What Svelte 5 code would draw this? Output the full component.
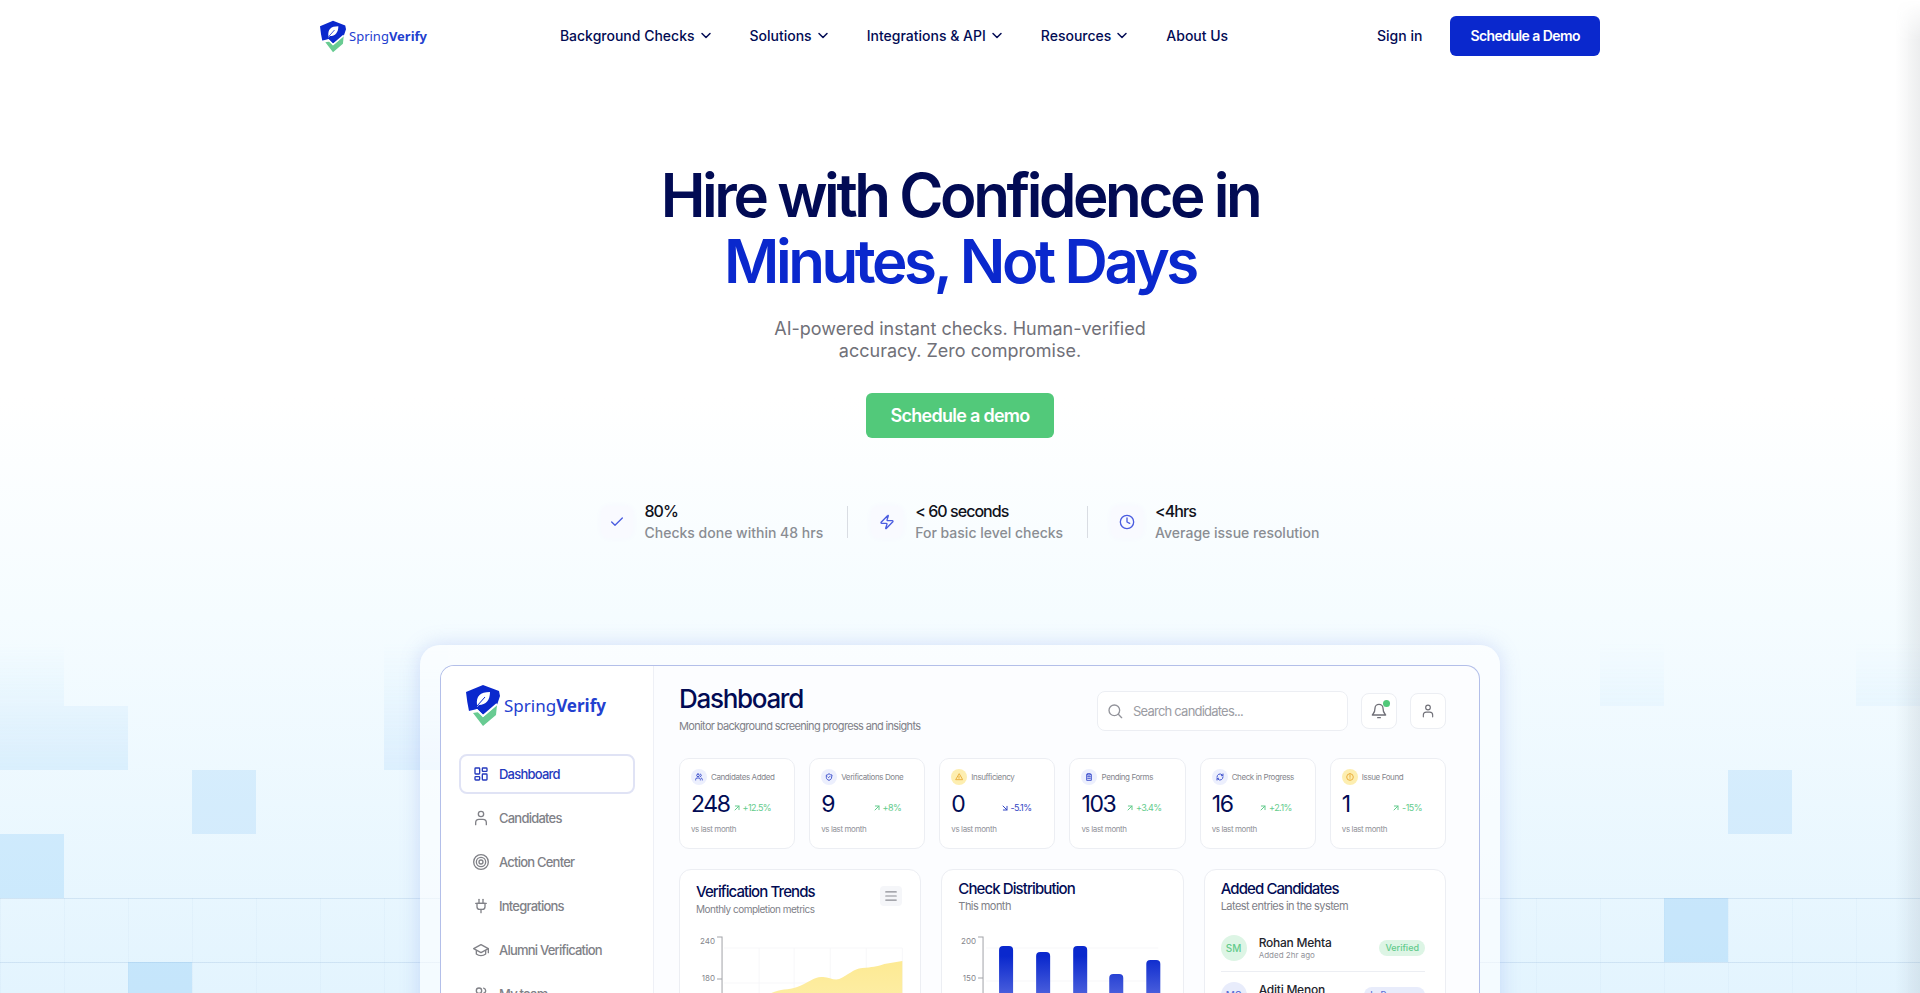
<script>
	const navItems = [
		{ label: 'Background Checks', menu: true },
		{ label: 'Solutions', menu: true },
		{ label: 'Integrations & API', menu: true },
		{ label: 'Resources', menu: true },
		{ label: 'About Us', menu: false }
	];

	const highlights = [
		{ icon: 'check', value: '80%', text: 'Checks done within 48 hrs' },
		{ icon: 'zap', value: '< 60 seconds', text: 'For basic level checks' },
		{ icon: 'clock', value: '<4hrs', text: 'Average issue resolution' }
	];

	const sideItems = [
		{ icon: 'grid', label: 'Dashboard' },
		{ icon: 'user', label: 'Candidates' },
		{ icon: 'target', label: 'Action Center' },
		{ icon: 'plug', label: 'Integrations' },
		{ icon: 'cap', label: 'Alumni Verification' },
		{ icon: 'users', label: 'My team' }
	];

	const stats = [
		{ icon: 'users', label: 'Candidates Added', value: 248, trend: '+12.5%' },
		{ icon: 'shield', label: 'Verifications Done', value: 9, trend: '+8%' },
		{ icon: 'alert', label: 'Insufficiency', value: 0, trend: '-5.1%', down: true, warn: true },
		{ icon: 'clipboard', label: 'Pending Forms', value: 103, trend: '+3.4%' },
		{ icon: 'refresh', label: 'Check in Progress', value: 16, trend: '+2.1%' },
		{ icon: 'info', label: 'Issue Found', value: 1, trend: '-15%', warn: true }
	];

	const candidates = [
		{ initials: 'SM', name: 'Rohan Mehta', added: 'Added 2hr ago', status: 'Verified', tone: 'green' },
		{ initials: 'MS', name: 'Aditi Menon', added: 'Added 2hr ago', status: 'In Progress', tone: 'blue' }
	];

	const bars = [
		{ x: 36, top: 15 },
		{ x: 73, top: 21 },
		{ x: 110, top: 15 },
		{ x: 146, top: 43 },
		{ x: 183, top: 29 }
	];

	// tiles of the background, as column and row on a 64px grid
	const tiles = [
		{ col: 1, row: 1, alpha: 0.16 },
		{ col: 1, row: 2, alpha: 0.17 },
		{ col: 2, row: 2, alpha: 0.17 },
		{ col: 7, row: 1, alpha: 0.14 },
		{ col: 7, row: 2, alpha: 0.15 },
		{ col: 4, row: 3, alpha: 0.2 },
		{ col: 1, row: 4, alpha: 0.24 },
		{ col: 3, row: 6, alpha: 0.28 },
		{ col: 26, row: 1, alpha: 0.12 },
		{ col: 30, row: 1, alpha: 0.12 },
		{ col: 28, row: 3, alpha: 0.2 },
		{ col: 27, row: 5, alpha: 0.28 }
	];

	const paths = {
		check: ['M20 6 9 17l-5-5'],
		zap: ['M4 14a1 1 0 0 1-.78-1.63l9.9-10.2a.5.5 0 0 1 .86.46l-1.92 6.02A1 1 0 0 0 13 10h7a1 1 0 0 1 .78 1.63l-9.9 10.2a.5.5 0 0 1-.86-.46l1.92-6.02A1 1 0 0 0 11 14z'],
		clock: ['M12 2a10 10 0 1 0 0 20 10 10 0 0 0 0-20z', 'M12 6v6l4 2'],
		grid: ['M4 3h5a1 1 0 0 1 1 1v7a1 1 0 0 1-1 1H4a1 1 0 0 1-1-1V4a1 1 0 0 1 1-1z', 'M15 3h5a1 1 0 0 1 1 1v3a1 1 0 0 1-1 1h-5a1 1 0 0 1-1-1V4a1 1 0 0 1 1-1z', 'M15 12h5a1 1 0 0 1 1 1v7a1 1 0 0 1-1 1h-5a1 1 0 0 1-1-1v-7a1 1 0 0 1 1-1z', 'M4 16h5a1 1 0 0 1 1 1v3a1 1 0 0 1-1 1H4a1 1 0 0 1-1-1v-3a1 1 0 0 1 1-1z'],
		user: ['M20 22v-3a5 5 0 0 0-5-5H9a5 5 0 0 0-5 5v3', 'M12 2a4 4 0 1 0 0 8 4 4 0 0 0 0-8z'],
		target: ['M12 1a11 11 0 1 0 0 22 11 11 0 0 0 0-22z', 'M12 5a7 7 0 1 0 0 14 7 7 0 0 0 0-14z', 'M12 9a3 3 0 1 0 0 6 3 3 0 0 0 0-6z'],
		plug: ['M12 22v-5', 'M9 8V2', 'M15 8V2', 'M4 8h16', 'M18 8v5a4 4 0 0 1-4 4h-4a4 4 0 0 1-4-4V8z'],
		cap: ['M12 4 1 10l11 6 11-6z', 'M5 13v5c4 3 10 3 14 0v-5', 'M23 10v6'],
		users: ['M16 21v-2a4 4 0 0 0-4-4H6a4 4 0 0 0-4 4v2', 'M9 3a4 4 0 1 0 0 8 4 4 0 0 0 0-8z', 'M22 21v-2a4 4 0 0 0-3-3.87', 'M16 3.13a4 4 0 0 1 0 7.75'],
		shield: ['M20 13c0 5-3.5 7.5-8 9-4.5-1.5-8-4-8-9V6c3 0 6-1.5 8-4 2 2.5 5 4 8 4z', 'm9 12 2 2 4-4'],
		alert: ['M12 3 2 20h20z', 'M12 10v4', 'M12 17h.01'],
		clipboard: ['M8 4H5v18h14V4h-3', 'M8 2h8v4H8z', 'M8 11h8', 'M8 16h8'],
		refresh: ['M3 12a9 9 0 0 1 15-6.7L21 8', 'M21 3v5h-5', 'M21 12a9 9 0 0 1-15 6.7L3 16', 'M3 21v-5h5'],
		info: ['M12 2a10 10 0 1 0 0 20 10 10 0 0 0 0-20z', 'M12 7v6', 'M12 17h.01'],
		search: ['M11 3a8 8 0 1 0 0 16 8 8 0 0 0 0-16z', 'm22 22-5-5'],
		bell: ['M6 8a6 6 0 0 1 12 0c0 7 3 8 4 10H2c1-2 4-3 4-10', 'M10 22h4'],
		menu: ['M3 5h18', 'M3 12h18', 'M3 19h18'],
		chevron: ['m4 7 8 8 8-8'],
		up: ['M6 18 18 6', 'M7 6h11v11'],
		down: ['m6 6 12 12', 'M18 7v11H7']
	};
</script>

{#snippet icon(name, size, weight = 2)}
	<svg
		width={size}
		height={size}
		viewBox="0 0 24 24"
		fill="none"
		stroke="currentColor"
		stroke-width={weight}
		stroke-linecap="round"
		stroke-linejoin="round"
		aria-hidden="true"
	>
		{#each paths[name] as d}
			<path {d} />
		{/each}
	</svg>
{/snippet}

{#snippet brand()}
	<svg class="brand-mark" viewBox="0 0 34 41" aria-hidden="true">
		<path fill="#0a28cd" d="M17 0 33 6 34 11 31 20 27 23 17 30 11 24 8 26 3 26Q1 17 0 7z" />
		<path fill="#68cb92" d="M7 28 13 27 17 32 31 20 30 30 17 41z" />
		<path fill="#fff" d="M11 20C10 11 14 7 24 7 24 15 20 20 13 20L11 22z" />
		<path fill="none" stroke="#0a28cd" stroke-width="1" d="M11 21 19 12" />
		<path fill="none" stroke="#fff" stroke-width="2" d="M3 27 11 25 17 31 31 19" />
	</svg>
	<span class="brand-name">Spring<b>Verify</b></span>
{/snippet}

<div class="page">
	<div class="backdrop" aria-hidden="true">
		{#each tiles as tile}
			<span
				class="tile"
				style={`grid-column: ${tile.col}; grid-row: ${tile.row}; opacity: ${tile.alpha}`}
			></span>
		{/each}
	</div>

	<header class="topbar">
		<a class="brand" href="/">{@render brand()}</a>
		<nav class="nav">
			{#each navItems as item}
				{#if item.menu}
					<button class="nav-item" type="button">
						{item.label}
						{@render icon('chevron', 12, 3)}
					</button>
				{:else}
					<a class="nav-item" href="/about">{item.label}</a>
				{/if}
			{/each}
		</nav>
		<div class="actions">
			<a class="nav-item" href="/signin">Sign in</a>
			<a class="btn btn--primary" href="/demo">Schedule a Demo</a>
		</div>
	</header>

	<main>
		<section class="hero">
			<h1>Hire with Confidence in <span>Minutes, Not Days</span></h1>
			<p class="lead">AI-powered instant checks. Human-verified accuracy. Zero compromise.</p>
			<a class="btn btn--cta" href="/demo">Schedule a demo</a>

			<ul class="highlights">
				{#each highlights as item}
					<li>
						<span class="highlight-icon">{@render icon(item.icon, 16)}</span>
						<div class="highlight-body">
							<strong>{item.value}</strong>
							<span class="highlight-text">{item.text}</span>
						</div>
					</li>
				{/each}
			</ul>
		</section>

		<section class="frame">
			<div class="app">
				<aside class="sidebar">
					<div class="brand brand--large">{@render brand()}</div>
					<nav class="side-nav">
						{#each sideItems as item, i}
							<a class="side-item" class:side-item--active={i === 0} href="#{item.icon}">
								{@render icon(item.icon, 16)}
								{item.label}
							</a>
						{/each}
					</nav>
				</aside>

				<div class="content">
					<div class="content-head">
						<div>
							<h2>Dashboard</h2>
							<p>Monitor background screening progress and insights</p>
						</div>
						<div class="tools">
							<label class="search">
								{@render icon('search', 16)}
								<input type="search" placeholder="Search candidates..." aria-label="Search candidates" />
							</label>
							<button class="tool" type="button" aria-label="Notifications">
								{@render icon('bell', 16)}
								<span class="dot"></span>
							</button>
							<button class="tool" type="button" aria-label="Account">
								{@render icon('user', 14)}
							</button>
						</div>
					</div>

					<div class="stats">
						{#each stats as stat}
							<article class="stat">
								<div class="stat-label">
									<span class="stat-icon" class:stat-icon--warn={stat.warn}>
										{@render icon(stat.icon, 8, 3)}
									</span>
									{stat.label}
								</div>
								<div class="stat-row">
									<span class="stat-value">{stat.value}</span>
									<span class="trend" class:trend--down={stat.down}>
										{@render icon(stat.down ? 'down' : 'up', 8, 3)}
										{stat.trend}
									</span>
								</div>
								<div class="stat-note">vs last month</div>
							</article>
						{/each}
					</div>

					<div class="panels">
						<article class="panel">
							<div class="panel-head panel-head--menu">
								<div>
									<h3>Verification Trends</h3>
									<p>Monthly completion metrics</p>
								</div>
								<button class="panel-menu" type="button" aria-label="Chart options">
									{@render icon('menu', 14)}
								</button>
							</div>
							<svg class="chart" viewBox="0 0 208 120">
								<defs>
									<linearGradient id="area" x1="0" y1="0" x2="0" y2="1">
										<stop offset="0" stop-color="#fdea93" />
										<stop offset="1" stop-color="#fdf2bd" />
									</linearGradient>
								</defs>
								<path class="gridline" d="M28 17H206M28 52H206M63 17V120M98 17V120M134 17V120M170 17V120M206 17V120" />
								<path
									fill="url(#area)"
									d="M26 120V102C45 92 56 78 75 62C84 58 92 59 101 56C112 52 118 46 125 46C132 45 137 50 143 48C152 44 157 38 166 37C176 36 180 36 188 33L206 30V120z"
								/>
								<path class="axis" d="M21 6H26V120M21 48H26" />
								<text x="19" y="13">240</text>
								<text x="19" y="50">180</text>
							</svg>
						</article>

						<article class="panel">
							<div class="panel-head">
								<div>
									<h3>Check Distribution</h3>
									<p>This month</p>
								</div>
							</div>
							<svg class="chart" viewBox="0 0 208 120">
								<defs>
									<linearGradient id="bar" gradientUnits="userSpaceOnUse" x1="0" y1="25" x2="0" y2="100">
										<stop offset="0" stop-color="#0a28cd" />
										<stop offset="1" stop-color="#8794ea" />
									</linearGradient>
								</defs>
								<path class="gridline" d="M28 17H200M28 50H200" />
								{#each bars as bar}
									<rect x={bar.x + 5} y={bar.top} width="14" height="130" rx="4" fill="url(#bar)" />
								{/each}
								<path class="axis" d="M20 6H25V120M20 47H25" />
								<text x="18" y="13">200</text>
								<text x="18" y="50">150</text>
							</svg>
						</article>

						<article class="panel">
							<div class="panel-head">
								<div>
									<h3>Added Candidates</h3>
									<p>Latest entries in the system</p>
								</div>
							</div>
							<ul class="people">
								{#each candidates as person}
									<li>
										<span class="avatar avatar--{person.tone}">{person.initials}</span>
										<div class="person">
											<strong>{person.name}</strong>
											<small>{person.added}</small>
										</div>
										<span class="badge badge--{person.tone}">{person.status}</span>
									</li>
								{/each}
							</ul>
						</article>
					</div>
				</div>
			</div>
		</section>
	</main>
</div>

<style>
	:global(body) {
		background: #fff;
		font-family: Inter, 'Liberation Sans', sans-serif;
	}

	.page {
		--navy: #020b54;
		--blue: #0a28cd;
		--green: #52c97a;
		--line: #eceef3;
		--muted: #707078;
		position: relative;
		height: 100vh;
		overflow: hidden;
		background: linear-gradient(#fff 40%, #f5fcff 62%, #e3f4fe);
		color: var(--navy);
	}

	.page::after {
		content: '';
		position: absolute;
		inset: 0 0 0 auto;
		width: 24px;
		background: linear-gradient(90deg, transparent, rgba(70, 80, 90, 0.1));
		mask-image: linear-gradient(transparent, #000 40px);
		pointer-events: none;
	}

	.backdrop {
		position: absolute;
		inset: 642px 0 0;
		display: grid;
		grid-template-columns: repeat(30, 64px);
		grid-auto-rows: 64px;
		overflow: hidden;
		mask-image: linear-gradient(transparent, #000 128px);
	}

	.backdrop::before {
		content: '';
		position: absolute;
		inset: 256px 0 0;
		background:
			repeating-linear-gradient(rgba(90, 140, 190, 0.16) 0 1px, transparent 1px 64px),
			repeating-linear-gradient(90deg, rgba(90, 140, 190, 0.04) 0 1px, transparent 1px 64px);
	}

	.tile {
		background: #76bff5;
	}

	a {
		color: inherit;
		text-decoration: none;
	}

	button {
		font: inherit;
		color: inherit;
		padding: 0;
		border: 0;
		background: none;
		cursor: pointer;
	}

	h1,
	h2,
	h3,
	p,
	ul {
		margin: 0;
		padding: 0;
		list-style: none;
	}

	svg {
		flex: none;
	}

	.topbar {
		position: relative;
		display: flex;
		align-items: center;
		justify-content: space-between;
		max-width: 1280px;
		height: 72px;
		margin: 0 auto;
	}

	.brand {
		display: flex;
		align-items: center;
		gap: 3px;
		color: #2340cf;
		font-family: 'Noto Sans', 'Open Sans', sans-serif;
		font-size: 13px;
		line-height: 20px;
	}

	.brand-mark {
		width: 26px;
		height: 33px;
	}

	.brand--large {
		gap: 4px;
		font-size: 17px;
	}

	.brand--large .brand-mark {
		width: 34px;
		height: 41px;
	}

	.nav {
		display: flex;
		gap: 38px;
		margin-right: 16px;
	}

	.nav-item {
		display: flex;
		align-items: center;
		gap: 5px;
		font-size: 14px;
		font-weight: 500;
		line-height: 20px;
	}

	.actions {
		display: flex;
		align-items: center;
		gap: 28px;
	}

	.btn {
		display: inline-block;
		border-radius: 6px;
		color: #fff;
		font-weight: 600;
		letter-spacing: -0.04em;
	}

	.btn--primary {
		padding: 10px 20px;
		background: var(--blue);
		font-size: 14px;
		line-height: 20px;
	}

	.hero {
		position: relative;
		display: flex;
		flex-direction: column;
		align-items: center;
		padding: 90px 24px 0;
		text-align: center;
	}

	h1 {
		font-size: 60px;
		font-weight: 600;
		line-height: 66px;
		letter-spacing: -0.057em;
	}

	h1 span {
		display: block;
		color: var(--blue);
	}

	.lead {
		max-width: 400px;
		margin-top: 24px;
		color: var(--muted);
		font-size: 18px;
		line-height: 22px;
	}

	.btn--cta {
		margin-top: 31px;
		padding: 11px 24px;
		background: var(--green);
		font-size: 18px;
		line-height: 23px;
	}

	.highlights {
		display: flex;
		margin-top: 62px;
		text-align: left;
	}

	.highlights li {
		display: flex;
		align-items: center;
		gap: 12px;
		height: 44px;
	}

	.highlights li + li {
		position: relative;
		margin-left: 24px;
		padding-left: 24px;
	}

	.highlights li + li::before {
		content: '';
		position: absolute;
		left: 0;
		top: 6px;
		bottom: 6px;
		width: 1px;
		background: #d9dde3;
	}

	.highlight-icon {
		display: grid;
		place-items: center;
		width: 32px;
		height: 32px;
		border-radius: 8px;
		background: #f9faff;
		box-shadow: 0 0 6px #f6f7ff;
		color: #4a5ce0;
	}

	.highlight-body {
		padding-bottom: 2px;
	}

	.highlights strong {
		display: block;
		color: #10121c;
		font-size: 16px;
		font-weight: 500;
		line-height: 22px;
		letter-spacing: -0.06em;
	}

	.highlight-text {
		color: #8a8d93;
		font-size: 14px;
		font-weight: 500;
		line-height: 20px;
	}

	.frame {
		position: relative;
		box-sizing: border-box;
		max-width: 1080px;
		margin: 101px auto 0;
		padding: 20px 20px 0;
		border-radius: 20px 20px 0 0;
		background: rgba(255, 255, 255, 0.6);
		box-shadow: 0 0 20px rgba(120, 145, 235, 0.28);
	}

	.app {
		display: grid;
		grid-template-columns: 213px 1fr;
		border: 1px solid #b3bfe9;
		border-bottom: 0;
		border-radius: 14px 14px 0 0;
		background: #fcfdff;
		overflow: hidden;
	}

	.sidebar {
		padding: 19px 18px 0;
		border-right: 1px solid #eef0f6;
		background: #fff;
	}

	.sidebar .brand {
		padding-left: 7px;
	}

	.side-nav {
		display: flex;
		flex-direction: column;
		gap: 4px;
		margin-top: 28px;
	}

	.side-item {
		box-sizing: border-box;
		display: flex;
		align-items: center;
		gap: 10px;
		height: 40px;
		padding: 0 13px;
		border: 1px solid transparent;
		border-radius: 8px;
		color: #808187;
		font-size: 13px;
		font-weight: 500;
		letter-spacing: -0.06em;
	}

	.side-item--active {
		border: 2px solid #e0e3f5;
		padding: 0 12px;
		color: #2439bd;
	}

	.content {
		padding: 17px 33px 0 25px;
	}

	.content-head {
		display: flex;
		justify-content: space-between;
	}

	h2 {
		font-size: 26px;
		font-weight: 500;
		line-height: 32px;
		letter-spacing: -0.05em;
	}

	.content-head p {
		margin-top: 3px;
		color: #808188;
		font-size: 11px;
		line-height: 16px;
		letter-spacing: -0.06em;
	}

	.tools {
		display: flex;
		align-items: center;
		gap: 13px;
		height: 40px;
		margin-top: 8px;
	}

	.search {
		box-sizing: border-box;
		display: flex;
		align-items: center;
		gap: 8px;
		width: 251px;
		height: 40px;
		padding: 0 9px;
		border: 1px solid var(--line);
		border-radius: 8px;
		background: #fff;
		color: #92939a;
	}

	.search input {
		flex: 1;
		min-width: 0;
		border: 0;
		outline: 0;
		background: none;
		font: inherit;
		font-size: 13px;
		letter-spacing: -0.06em;
	}

	.search input::placeholder {
		color: #9b9ca3;
	}

	.tool {
		position: relative;
		box-sizing: border-box;
		display: grid;
		place-items: center;
		width: 36px;
		height: 36px;
		border: 1px solid var(--line);
		border-radius: 8px;
		background: #fff;
		color: #707078;
	}

	.dot {
		position: absolute;
		top: 6px;
		right: 6px;
		width: 7px;
		height: 7px;
		border-radius: 50%;
		background: var(--green);
	}

	.stats {
		display: grid;
		grid-template-columns: repeat(6, 1fr);
		gap: 14px;
		margin-top: 24px;
	}

	.stat {
		box-sizing: border-box;
		height: 91px;
		padding: 10px 11px;
		border: 1px solid var(--line);
		border-radius: 10px;
		background: #fff;
		white-space: nowrap;
	}

	.stat-label {
		display: flex;
		align-items: center;
		gap: 4px;
		color: #85868d;
		font-size: 8px;
		line-height: 16px;
		letter-spacing: -0.05em;
	}

	.stat-icon {
		display: grid;
		place-items: center;
		width: 16px;
		height: 16px;
		border-radius: 50%;
		background: #eceffd;
		color: #4557cf;
	}

	.stat-icon--warn {
		background: #fdeeb0;
		color: #eab040;
	}

	.stat-row {
		display: flex;
		align-items: baseline;
		justify-content: space-between;
		padding-right: 12px;
		margin-top: 5px;
	}

	.stat-value {
		font-size: 23px;
		line-height: 28px;
		letter-spacing: -0.06em;
	}

	.trend {
		display: flex;
		align-items: center;
		gap: 2px;
		color: #63cb8c;
		font-size: 9px;
		line-height: 12px;
		letter-spacing: -0.06em;
	}

	.trend--down {
		color: #3346c4;
	}

	.stat-note {
		margin-top: 5px;
		color: #919299;
		font-size: 8px;
		line-height: 12px;
		letter-spacing: -0.05em;
	}

	.panels {
		display: grid;
		grid-template-columns: repeat(3, 1fr);
		gap: 20px;
		margin-top: 20px;
	}

	.panel {
		box-sizing: border-box;
		height: 200px;
		padding: 10px 16px;
		border: 1px solid var(--line);
		border-radius: 12px;
		background: #fff;
	}

	.panel-head {
		display: flex;
		align-items: flex-start;
		justify-content: space-between;
		height: 37px;
	}

	.panel-head--menu {
		box-sizing: border-box;
		padding-top: 3px;
	}

	h3 {
		font-size: 15px;
		font-weight: 500;
		line-height: 18px;
		letter-spacing: -0.06em;
	}

	.panel-head p {
		color: #808188;
		font-size: 11px;
		line-height: 16px;
		letter-spacing: -0.05em;
	}

	.panel-head--menu p {
		font-size: 10px;
	}

	.panel-menu {
		display: grid;
		place-items: center;
		width: 22px;
		height: 20px;
		margin: 3px 2px;
		border-radius: 4px;
		background: #f5f6f9;
		color: #8b8c93;
	}

	.chart {
		display: block;
		width: 100%;
		margin-top: 14px;
	}

	.chart text {
		fill: #85868c;
		font-size: 8px;
		text-anchor: end;
	}

	.axis {
		fill: none;
		stroke: #a2a3a8;
		stroke-width: 1;
	}

	.gridline {
		fill: none;
		stroke: #f7f7f9;
	}

	.people {
		margin-top: 8px;
	}

	.people li {
		display: flex;
		align-items: center;
		height: 46px;
		margin-right: 4px;
	}

	.people li + li {
		border-top: 1px solid var(--line);
	}

	.avatar {
		display: grid;
		place-items: center;
		width: 26px;
		height: 26px;
		margin-right: 12px;
		border-radius: 50%;
		font-size: 10px;
		font-weight: 500;
	}

	.person {
		flex: 1;
	}

	.person strong {
		display: block;
		color: #24252d;
		font-size: 12px;
		font-weight: 500;
		line-height: 14px;
		letter-spacing: -0.02em;
	}

	.person small {
		display: block;
		color: #92939a;
		font-size: 8px;
		line-height: 10px;
	}

	.badge {
		padding: 0 6px;
		border-radius: 8px;
		font-size: 9px;
		font-weight: 500;
		line-height: 16px;
	}

	.avatar--green,
	.badge--green {
		background: #ddf5e5;
		color: #63cb8c;
	}

	.avatar--blue,
	.badge--blue {
		background: #e8ecfb;
		color: #5d70d6;
	}
</style>
